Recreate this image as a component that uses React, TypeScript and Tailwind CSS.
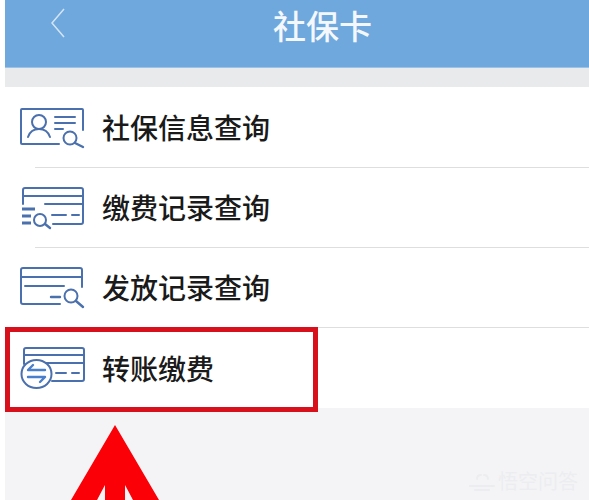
const cjk = 'font-["Liberation_Sans","Noto_Sans_CJK_SC",sans-serif]';

function ProfileIcon() {
  return (
    <svg viewBox="0 0 80 60" className="h-[60px] w-[80px] shrink-0" fill="none" stroke="#4a70ad" strokeWidth="2" strokeLinecap="round" strokeLinejoin="round">
      <path d="M73 30V10a1 1 0 0 0-1-1H12a1 1 0 0 0-1 1v33a1 1 0 0 0 1 1h37" />
      <circle cx="29" cy="22" r="7" />
      <path d="M18 37c2-6 6-8 11-8s9 2 11 8" />
      <path d="M45 17h20M45 23h20M45 29h8" />
      <circle cx="60" cy="38" r="6.5" />
      <path d="M65 43l8 4" strokeWidth="2.4" />
    </svg>
  );
}

function RecordIcon() {
  return (
    <svg viewBox="0 0 80 60" className="h-[60px] w-[80px] shrink-0" fill="none" stroke="#4a70ad" strokeWidth="2" strokeLinecap="round" strokeLinejoin="round">
      <path d="M13 24V10a2 2 0 0 1 2-2h56a2 2 0 0 1 2 2v32a2 2 0 0 1-2 2H43" />
      <path d="M13 16h60M35 24h38" />
      <path d="M42 35h14M62 35h7" />
      <path d="M12 29h13M12 36h9M12 43h9" strokeWidth="3" strokeLinecap="butt" />
      <circle cx="30" cy="40" r="6" />
      <path d="M35 44l5 4" strokeWidth="2.4" />
    </svg>
  );
}

function PayoutIcon() {
  return (
    <svg viewBox="0 0 80 60" className="h-[60px] w-[80px] shrink-0" fill="none" stroke="#4a70ad" strokeWidth="2" strokeLinecap="round" strokeLinejoin="round">
      <path d="M72 27V10a2 2 0 0 0-2-2H13a2 2 0 0 0-2 2v32a2 2 0 0 0 2 2h37" />
      <path d="M11 17h61M15 26h39" />
      <path d="M41 37h9" strokeWidth="2.4" />
      <circle cx="61" cy="36" r="6.5" />
      <path d="M66 41l7 6" strokeWidth="2.4" />
    </svg>
  );
}

function TransferIcon() {
  return (
    <svg viewBox="0 0 80 60" className="h-[60px] w-[80px] shrink-0" fill="none" stroke="#4a70ad" strokeWidth="2" strokeLinecap="round" strokeLinejoin="round">
      <path d="M14 24V10a2 2 0 0 1 2-2h56a2 2 0 0 1 2 2v29a2 2 0 0 1-2 2H42" />
      <path d="M14 15h60M24 23h50" />
      <path d="M46 33h10M62 33h7" />
      <ellipse cx="26.5" cy="34" rx="15" ry="14" fill="#ffffff" />
      <path d="M35 30H18l5-5M18 37h17l-5 5" stroke="#4a7fcb" strokeWidth="2.4" />
    </svg>
  );
}

const rows = [
  { label: '社保信息查询', Icon: ProfileIcon, height: 'h-[80px]', iconOffset: 'mt-[6px]', divider: 'ml-[30px]' },
  { label: '缴费记录查询', Icon: RecordIcon, height: 'h-[79px]', iconOffset: 'mt-[5px]', divider: 'ml-[30px]' },
  { label: '发放记录查询', Icon: PayoutIcon, height: 'h-[79px]', iconOffset: 'mt-[5px]', divider: 'ml-0' },
  { label: '转账缴费', Icon: TransferIcon, height: 'h-[80px]', iconOffset: 'mt-[4px]', divider: '' },
];

export default function App() {
  return (
    <div className={`relative h-[500px] w-[589px] overflow-hidden bg-white pl-[5px] ${cjk}`}>
      <header className="flex h-[68px] items-center border-b border-[#9cc3e6] bg-[#6fa8dc]">
        <svg viewBox="0 0 16 32" className="mb-[22px] ml-[45px] h-[32px] w-[16px]" fill="none" stroke="#d3e5f5" strokeWidth="1.5">
          <path d="M14 2L2 16l12 14" />
        </svg>
        <h1 className="mb-[12px] ml-[207px] text-[33px] font-medium leading-none text-[#f4f8fc]">社保卡</h1>
      </header>
      <div className="h-[19px] bg-[#e9eaec]" />
      <ul>
        {rows.map(({ label, Icon, height, iconOffset, divider }) => (
          <li key={label} className="bg-white">
            <div className={`flex items-center pl-[5px] ${height}`}>
              <span className={iconOffset}>
                <Icon />
              </span>
              <span className="ml-[12px] mt-[5px] text-[28px] font-medium leading-none text-[#1a1a1a]">{label}</span>
            </div>
            {divider && <div className={`h-px bg-[#dedede] ${divider}`} />}
          </li>
        ))}
      </ul>
      <div className="h-[100px] bg-[#f4f4f6]" />

      {/* red highlight box and arrow drawn over the screenshot */}
      <div className="absolute left-[5px] top-[327px] h-[85px] w-[313px] border-[5px] border-[#d8101c]" />
      <svg viewBox="0 0 100 75" className="absolute left-[65px] top-[425px] h-[75px] w-[100px]" fill="#fb0007">
        <path d="M50 0L6 75h26l8-15v15h20V60l8 15h26z" />
      </svg>

      <div className="absolute left-[468px] top-[472px] flex items-center gap-[2px] text-[#ecedf0]">
        <svg viewBox="0 0 28 20" className="h-[20px] w-[28px]" fill="none" stroke="#ecedf0" strokeWidth="2" strokeLinecap="round">
          <path d="M9 7c0-3 2-4 4-4M16 3c2 0 4 1 4 4M2 14h24M7 18h14" />
        </svg>
        <span className="text-[20px] leading-none">悟空问答</span>
      </div>
    </div>
  );
}
